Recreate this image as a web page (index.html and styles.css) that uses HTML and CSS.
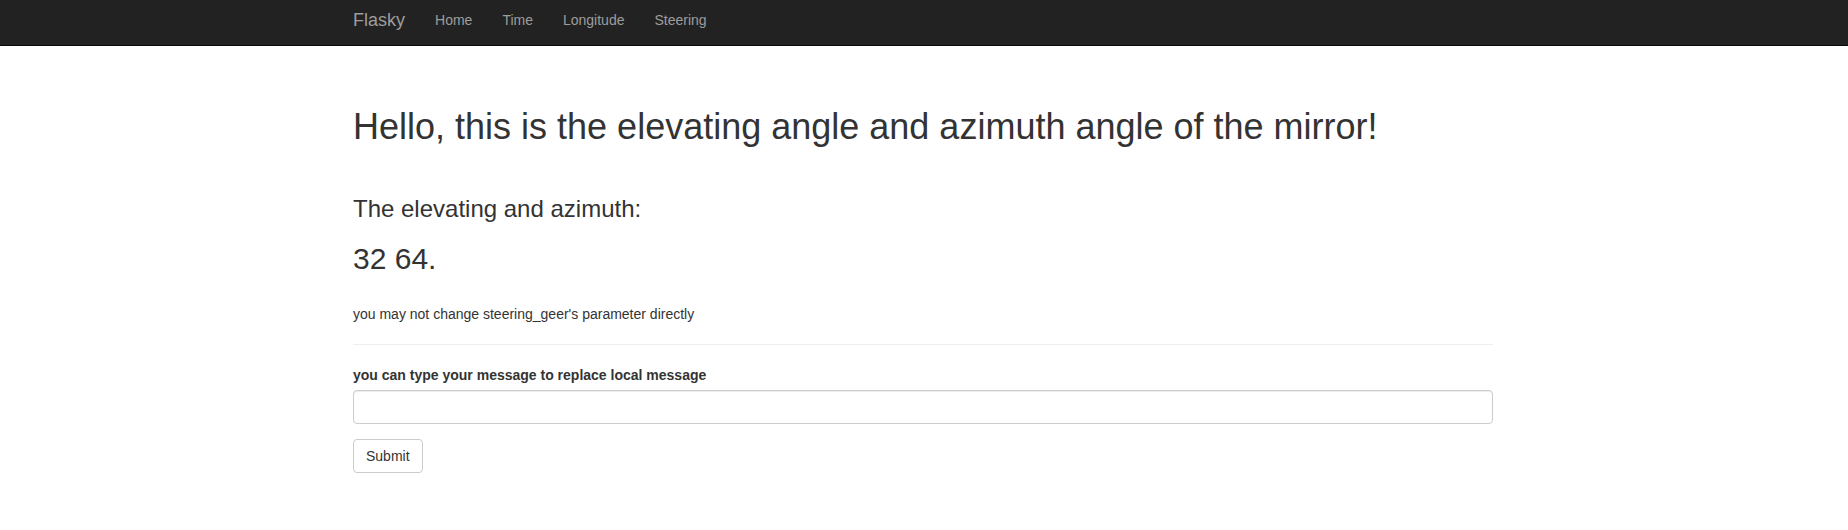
FILE: index.html
```html
<!DOCTYPE html>
<html lang="en">
<head>
<meta charset="utf-8">
<title>Flasky</title>
<link rel="stylesheet" href="styles.css">
</head>
<body>
<nav class="navbar">
  <div class="container nav-inner">
    <a class="brand" href="#">Flasky</a>
    <ul class="nav-links">
      <li><a href="#">Home</a></li>
      <li><a href="#">Time</a></li>
      <li><a href="#">Longitude</a></li>
      <li><a href="#">Steering</a></li>
    </ul>
  </div>
</nav>
<main class="container content">
  <h1 class="page-title">Hello, this is the elevating angle and azimuth angle of the mirror!</h1>
  <h3 class="sub-title">The elevating and azimuth:</h3>
  <h2 class="value">32 64.</h2>
  <p class="note">you may not change steering_geer's parameter directly</p>
  <hr class="divider">
  <form class="form">
    <div class="form-group">
      <label class="label" for="msg">you can type your message to replace local message</label>
      <input class="input" id="msg" type="text">
    </div>
    <button class="btn" type="submit">Submit</button>
  </form>
</main>
</body>
</html>
```

FILE: styles.css
```css
* { box-sizing: border-box; }
html, body { margin: 0; padding: 0; }
body {
  font-family: "Liberation Sans", Arial, Helvetica, sans-serif;
  font-size: 14px;
  line-height: 1.42857143;
  color: #333;
  background: #fff;
}
.container {
  width: 1170px;
  margin: 0 auto;
  padding: 0 16px 0 14px;
}
.navbar {
  background: #222;
  border-bottom: 1px solid #080808;
  height: 46px;
}
.nav-inner {
  display: flex;
  align-items: flex-start;
}
.brand {
  display: block;
  font-size: 18px;
  line-height: 20px;
  padding: 10px 15px 15px 0;
  color: #9d9d9d;
  text-decoration: none;
}
.nav-links {
  display: flex;
  list-style: none;
  margin: 0;
  padding: 0;
}
.nav-links a {
  display: block;
  padding: 10px 15px 15px;
  line-height: 20px;
  color: #9d9d9d;
  text-decoration: none;
}
.content {
  display: flow-root;
  padding-top: 20px;
}
.page-title {
  font-size: 36px;
  font-weight: 500;
  line-height: 1.1;
  margin: 41px 0 49px;
}
.sub-title {
  font-size: 24px;
  font-weight: 500;
  line-height: 1.1;
  margin: 0 0 10px;
}
.value {
  font-size: 30px;
  font-weight: 500;
  line-height: 1.1;
  margin: 20px 0 29px;
}
.note {
  margin: 0 0 10px;
}
.divider {
  margin: 20px 0;
  border: 0;
  border-top: 1px solid #eee;
  height: 0;
}
.form-group {
  margin-bottom: 15px;
}
.label {
  display: inline-block;
  font-weight: bold;
  margin-bottom: 5px;
}
.input {
  display: block;
  width: 100%;
  height: 34px;
  padding: 6px 12px;
  font-family: inherit;
  font-size: 14px;
  color: #555;
  background: #fff;
  border: 1px solid #ccc;
  border-radius: 4px;
  box-shadow: inset 0 1px 1px rgba(0,0,0,.075);
}
.btn {
  display: inline-block;
  padding: 6px 12px;
  font-family: inherit;
  font-size: 14px;
  line-height: 1.42857143;
  color: #333;
  background: #fff;
  border: 1px solid #ccc;
  border-radius: 4px;
}
```
